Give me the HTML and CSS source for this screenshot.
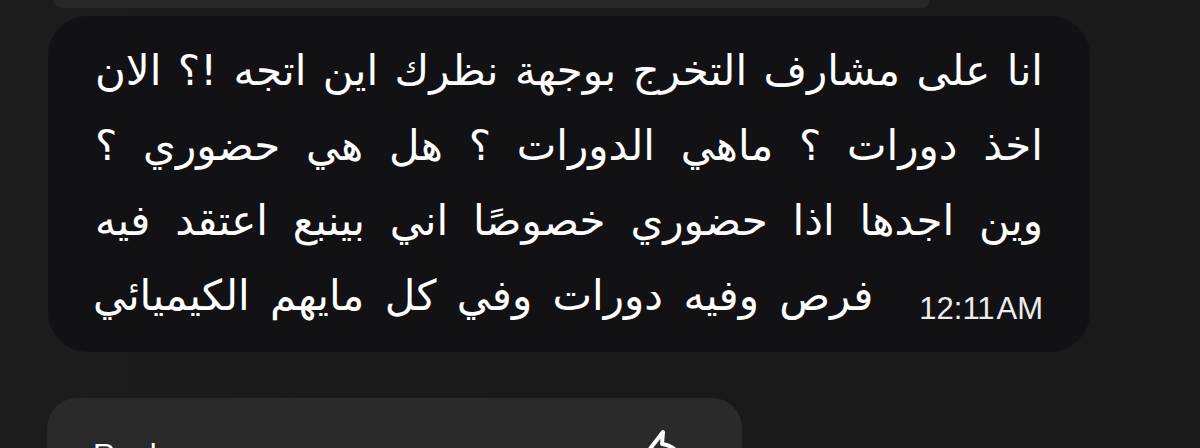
FILE: index.html
```html
<!DOCTYPE html>
<html lang="ar">
<head>
<meta charset="utf-8">
<link rel="stylesheet" href="styles.css">
</head>
<body>
<div class="screen">
  <div class="top-bar"></div>
  <div class="bubble">
    <div class="msg" dir="rtl">
      <div class="line">انا على مشارف التخرج بوجهة نظرك اين اتجه !؟ الان</div>
      <div class="line">اخذ دورات ؟ ماهي الدورات ؟ هل هي حضوري ؟</div>
      <div class="line">وين اجدها اذا حضوري خصوصًا اني بينبع اعتقد فيه</div>
      <div class="line last">
        <span class="time" dir="ltr">12:11 AM</span>
        <span class="last-text">فرص وفيه دورات وفي كل مايهم الكيميائي</span>
      </div>
    </div>
  </div>
  <div class="reply-card">
    <span class="reply-label">Reply</span>
    <svg class="reply-icon" viewBox="0 0 40 40" width="40" height="40">
      <path d="M3 30 L23 4 L22 16 C30 17 36 21 40 28" fill="none" stroke="#ffffff" stroke-width="4" stroke-linejoin="round" stroke-linecap="round"/>
    </svg>
  </div>
</div>
</body>
</html>
```

FILE: styles.css
```css
html, body {
  margin: 0;
  padding: 0;
  background: #1a1a1a;
  overflow: hidden;
}

.screen {
  width: 1200px;
  height: 448px;
  background: linear-gradient(90deg, #1c1c1c 0%, #191919 60%, #1b1b1b 100%);
  display: flex;
  flex-direction: column;
}

.top-bar, .bubble, .reply-card {
  flex-shrink: 0;
}

.top-bar {
  margin-left: 53px;
  width: 877px;
  height: 8px;
  background: #272727;
  border-radius: 0 0 14px 14px;
}

.bubble {
  margin-top: 8px;
  margin-left: 48px;
  width: 1042px;
  height: 336px;
  box-sizing: border-box;
  background: #121214;
  border-radius: 40px;
  padding: 17px 47px 0 47px;
}

.msg {
  font-family: "DejaVu Sans", sans-serif;
  font-size: 42px;
  line-height: 75px;
  word-spacing: 3px;
  color: #ffffff;
}

.line {
  white-space: nowrap;
  text-align: justify;
  text-align-last: justify;
}

.line.last {
  display: flex;
  flex-direction: row;
  justify-content: flex-start;
  align-items: baseline;
  text-align-last: auto;
}

.last-text {
  margin-right: 46px;
  word-spacing: 7px;
}

.time {
  align-self: flex-end;
  font-family: "Liberation Sans", Arial, sans-serif;
  font-size: 31px;
  line-height: 48px;
  color: #ececec;
  letter-spacing: 0;
  word-spacing: -5px;
}

.reply-card {
  margin-top: 46px;
  margin-left: 47px;
  width: 695px;
  height: 100px;
  box-sizing: border-box;
  background: #2a2a2a;
  border-radius: 30px;
  display: flex;
  align-items: flex-start;
  padding: 40px 62px 0 46px;
  justify-content: space-between;
}

.reply-label {
  font-family: "Liberation Sans", Arial, sans-serif;
  font-size: 31px;
  color: #ffffff;
  line-height: 36px;
}

.reply-icon {
  margin-top: -10px;
}
```
